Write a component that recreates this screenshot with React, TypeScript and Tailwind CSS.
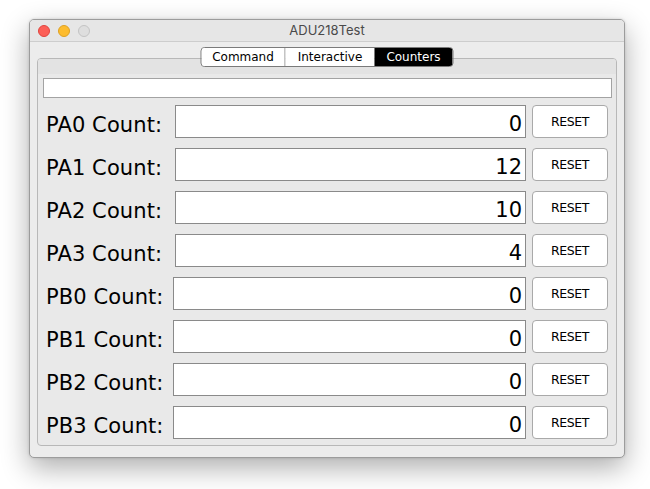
import React from "react";

const rows = [
  { name: "PA0 Count:", value: "0", w: "w-[129px]" },
  { name: "PA1 Count:", value: "12", w: "w-[129px]" },
  { name: "PA2 Count:", value: "10", w: "w-[129px]" },
  { name: "PA3 Count:", value: "4", w: "w-[129px]" },
  { name: "PB0 Count:", value: "0", w: "w-[127px]" },
  { name: "PB1 Count:", value: "0", w: "w-[127px]" },
  { name: "PB2 Count:", value: "0", w: "w-[127px]" },
  { name: "PB3 Count:", value: "0", w: "w-[127px]" },
];

export default function App() {
  return (
    <div className="min-h-screen w-full bg-white pt-[19px] pl-[29px] font-['DejaVu_Sans',sans-serif]">
      <div className="flex h-[439px] w-[596px] flex-col overflow-hidden rounded-[5px] border border-[#9c9c9c] bg-[#ececec] shadow-[0_10px_28px_rgba(0,0,0,0.32),0_0_3px_rgba(0,0,0,0.15)]">
        {/* Title bar */}
        <div className="grid h-[22px] shrink-0 grid-cols-[1fr_auto_1fr] items-center border-b border-[#cdcdcd] bg-[#e6e6e6]">
          <div className="flex items-center gap-[8px] pl-[8px]">
            <span className="h-[12px] w-[12px] rounded-full border border-[#e0443e] bg-[#fc5f57]" />
            <span className="h-[12px] w-[12px] rounded-full border border-[#dea123] bg-[#fdbc2e]" />
            <span className="h-[12px] w-[12px] rounded-full border border-[#c4c4c4] bg-[#dedede]" />
          </div>
          <div className="font-['Inter',sans-serif] text-[13px] leading-none text-[#4a4a4a]">ADU218Test</div>
          <div />
        </div>

        {/* Body */}
        <div className="relative flex-1 px-[7px] pt-[16px] pb-[11px]">
          {/* Tabs */}
          <div className="absolute left-1/2 top-[5px] z-10 flex h-[20px] -translate-x-1/2 overflow-hidden rounded-[4px] border border-[#7a7a7a] text-[12px] leading-none">
            <div className="flex w-[84px] items-center justify-center border-r border-[#8a8a8a] bg-white text-black">Command</div>
            <div className="flex w-[89px] items-center justify-center bg-white text-black">Interactive</div>
            <div className="flex w-[78px] items-center justify-center bg-black text-white">Counters</div>
          </div>

          {/* Panel */}
          <div className="flex h-full flex-col overflow-hidden rounded-[4px] border border-[#b8b8b8] bg-[#e9e9e9]">
            <div className="h-[15px] shrink-0 bg-[#e3e3e3]" />
            <div className="ml-[5px] mr-[4px] mt-[4px] h-[20px] shrink-0 border border-[#a3a3a3] bg-white" />
            <div className="mt-[7px] flex flex-col gap-[10px] pl-[8px] pr-[8px]">
              {rows.map((r) => (
                <div key={r.name} className="flex h-[33px] items-center">
                  <div className={`${r.w} shrink-0 pt-[7px] text-[21px] leading-none tracking-[0.1px] text-black`}>{r.name}</div>
                  <div className="flex h-[33px] flex-1 items-center justify-end border border-[#8a8a8a] bg-white pr-[3px] pt-[5px] text-[21px] leading-none text-black">
                    {r.value}
                  </div>
                  <button className="ml-[6px] flex h-[33px] w-[76px] shrink-0 items-center justify-center rounded-[4px] border border-[#a9a9a9] bg-white pt-[1px] text-[12.5px] leading-none tracking-[-0.4px] text-black">
                    RESET
                  </button>
                </div>
              ))}
            </div>
          </div>
        </div>
      </div>
    </div>
  );
}
